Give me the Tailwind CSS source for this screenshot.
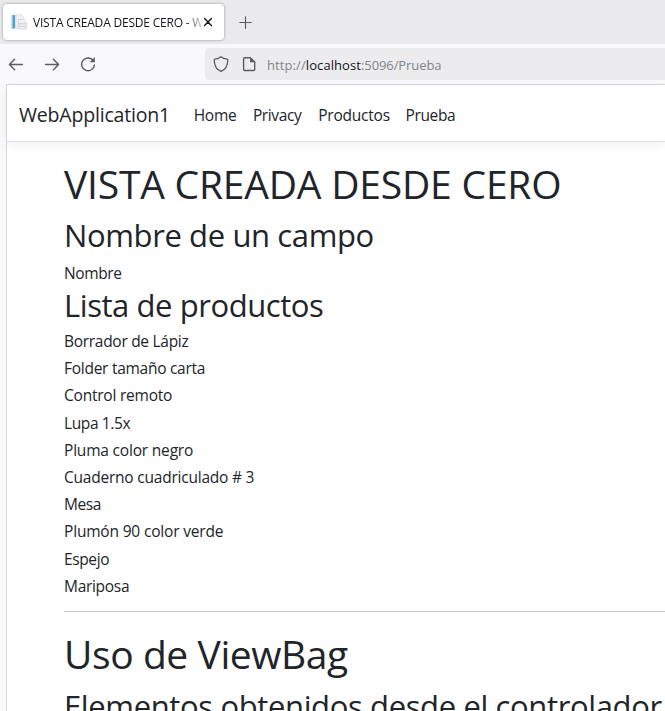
<!DOCTYPE html>
<html lang="es">
<head>
<meta charset="utf-8">
<title>VISTA CREADA DESDE CERO - WebApplication1</title>
<script src="https://cdn.jsdelivr.net/npm/@tailwindcss/browser@4"></script>
</head>
<body class="w-[665px] h-[711px] overflow-hidden bg-[#f9f9fb] font-['Open_Sans','Noto_Sans',sans-serif] text-[#212529] flex flex-col whitespace-nowrap">
  <!-- Tab strip -->
  <div class="h-11 shrink-0 bg-[#eaeaec] flex items-start pt-1 pl-[3px]">
    <div class="w-[221px] h-9 rounded bg-white shadow-[0_0_3px_rgba(0,0,0,0.4)] flex items-center pl-2">
      <svg class="w-4 h-4 shrink-0" viewBox="0 0 16 16">
        <rect x="0.8" y="1" width="3.4" height="13.5" fill="#4f9fd0"/>
        <rect x="0.8" y="1" width="1.2" height="13.5" fill="#8fc7e8"/>
        <path d="M5 .8h5.5L13 3.4V14.500H5z" fill="#f1f1f1" stroke="#d8dadc" stroke-width=".7"/>
        <path d="M7.5 5.5h5l2.8 2.6V15H7.5z" fill="#f0f1f2" stroke="#c9cdd0" stroke-width=".7"/>
        <path d="M8 9.800h7M8 12.300h7" fill="none" stroke="#c3c9cf" stroke-width=".9"/>
      </svg>
      <div class="ml-[6px] mt-[2px] w-[168px] shrink-0 overflow-hidden text-[12px] leading-5 tracking-[-0.2px] text-[#15141a] [mask-image:linear-gradient(to_right,black_152px,transparent_174px)]">VISTA CREADA DESDE CERO - WebApplication1</div>
      <svg class="w-3 h-3 ml-px shrink-0" viewBox="0 0 12 12"><path d="M2.600 2.600l6.800 6.800M9.400 2.600L2.600 9.400" stroke="#15141a" stroke-width="1.4" stroke-linecap="round"/></svg>
    </div>
    <svg class="ml-[13px] mt-[10px] w-4 h-4" viewBox="0 0 16 16"><path d="M8.5 2.8v11.4M2.8 8.5h11.4" stroke="#5b5b66" stroke-width="1.2" stroke-linecap="round"/></svg>
  </div>
  <!-- Toolbar -->
  <div class="h-10 shrink-0 flex items-center pl-2">
    <svg class="w-4 h-4" viewBox="0 0 16 16" fill="none" stroke="#5b5b66" stroke-width="1.4" stroke-linecap="round" stroke-linejoin="round"><path d="M14.4 8.5H1.6M6.6 3.2L1.4 8.5l5.2 5.3"/></svg>
    <svg class="ml-5 w-4 h-4" viewBox="0 0 16 16" fill="none" stroke="#5b5b66" stroke-width="1.4" stroke-linecap="round" stroke-linejoin="round"><path d="M1.6 8.5h12.8M9.4 3.2l5.2 5.3-5.2 5.3"/></svg>
    <svg class="ml-5 w-4 h-4" viewBox="0 0 16 16"><path d="M12.7 4A6.4 6.4 0 1 0 14.4 9" fill="none" stroke="#5b5b66" stroke-width="1.4" stroke-linecap="round"/><path d="M14.9 1v5.3H9.6z" fill="#5b5b66"/></svg>
    <div class="ml-[109px] grow h-8 rounded-l bg-[#ececee] flex items-center pl-2">
      <svg class="w-4 h-4" viewBox="0 0 16 16" fill="none" stroke="#5b5b66" stroke-width="1.3" stroke-linejoin="round"><path d="M8 .8C6.300 2.200 3.800 3 1.800 3.200c-.4 0-.6.300-.6.700C1.300 9 3.200 13.400 8 15.400c4.800-2 6.700-6.400 6.800-11.500 0-.4-.2-.7-.6-.7C12.200 3 9.700 2.200 8 .8z"/></svg>
      <svg class="ml-3 w-4 h-4" viewBox="0 0 16 16"><path d="M9.300 1.700H3.600a1 1 0 0 0-1 1v10.800a1 1 0 0 0 1 1h9.100a1 1 0 0 0 1-1V6z" fill="none" stroke="#5b5b66" stroke-width="1.4" stroke-linejoin="round"/><path d="M9 1.500v4.800h4.900z" fill="#5b5b66"/></svg>
      <div class="ml-[10px] flex text-[13px] leading-5 mt-[2px] text-[#84848a]"><span class="tracking-[0.1px]">http://</span><span class="tracking-[0.07px] text-[#15141a]">localhost</span><span class="tracking-[-0.08px]">:5096/Prueba</span></div>
    </div>
  </div>
  <!-- Page -->
  <div class="ml-[6px] grow min-h-0 bg-white border-t border-l border-[#d8d8dc] flex flex-col">
    <header class="h-[57px] shrink-0 border-b border-[#dee2e6] shadow-[0_4px_12px_rgba(0,0,0,0.05)] flex items-center pl-3 pt-[4px] text-[15.5px]">
      <a class="w-[174.700px] text-[19.5px] leading-[30px] tracking-[-0.19px]">WebApplication1</a>
      <nav class="flex leading-6">
        <a class="w-[59.200px] tracking-[-0.25px]">Home</a>
        <a class="w-[65.300px] tracking-[-0.36px]">Privacy</a>
        <a class="w-[87.400px] tracking-[-0.22px]">Productos</a>
        <a class="tracking-[-0.37px]">Prueba</a>
      </nav>
    </header>
    <main class="pl-[57px] pt-[18px] text-[15.5px] leading-[27.200px]">
      <h1 class="text-[39px] leading-[48px] tracking-[-0.2px]">VISTA CREADA DESDE CERO</h1>
      <h2 class="mt-[8px] text-[31px] leading-[38px] tracking-[-0.38px]">Nombre de un campo</h2>
      <p class="mt-[6px] leading-[26px] tracking-[-0.38px]">Nombre</p>
      <h2 class="text-[31px] leading-[38px] tracking-[-0.43px]">Lista de productos</h2>
      <div class="mt-[4px]">
        <p class="tracking-[-0.29px]">Borrador de Lápiz</p>
        <p class="tracking-[-0.27px]">Folder tamaño carta</p>
        <p class="tracking-[-0.22px]">Control remoto</p>
        <p class="tracking-[-0.38px]">Lupa 1.5x</p>
        <p class="tracking-[-0.19px]">Pluma color negro</p>
        <p class="tracking-[-0.22px]">Cuaderno cuadriculado # 3</p>
        <p class="tracking-[-0.4px]">Mesa</p>
        <p class="tracking-[-0.18px]">Plumón 90 color verde</p>
        <p class="tracking-[-0.38px]">Espejo</p>
        <p class="tracking-[-0.3px]">Mariposa</p>
      </div>
      <hr class="mt-[11px] border-[#c5c7c9]">
      <h1 class="mt-[18px] text-[39px] leading-[48px] tracking-[-0.42px]">Uso de ViewBag</h1>
      <h2 class="mt-[9px] text-[31px] leading-[38px] tracking-[-0.37px]">Elementos obtenidos desde el controlador</h2>
    </main>
  </div>
</body>
</html>
